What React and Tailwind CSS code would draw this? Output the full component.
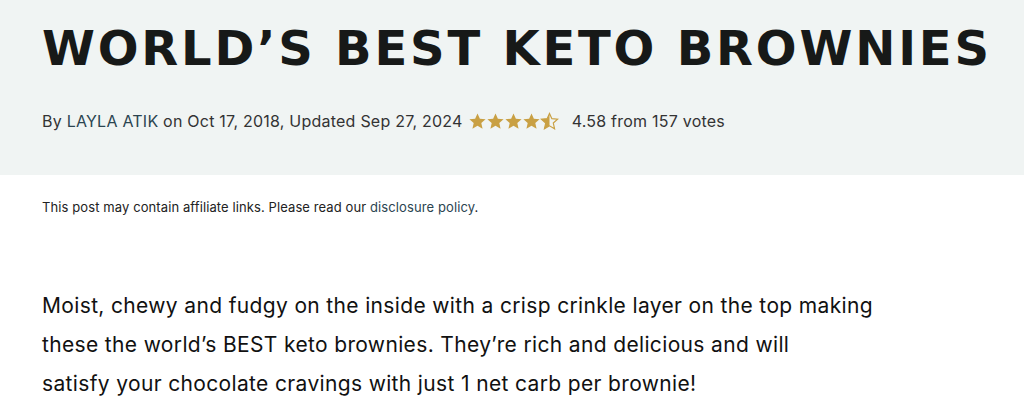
import React from "react";

const Star = ({ half }) => (
  <svg width="19" height="19" viewBox="0 0 24 24" className="-mr-[1px]">
    <defs>
      <clipPath id="halfclip">
        <rect x="0" y="0" width="12" height="24" />
      </clipPath>
    </defs>
    {half ? (
      <>
        <path
          d="M12 1.8l3 6.6 7.2.8-5.4 4.8 1.6 7.1L12 17.5l-6.4 3.6 1.6-7.1-5.4-4.8 7.2-.8z"
          fill="none"
          stroke="#c9a043"
          strokeWidth="1.5"
        />
        <path
          d="M12 1.8l3 6.6 7.2.8-5.4 4.8 1.6 7.1L12 17.5l-6.4 3.6 1.6-7.1-5.4-4.8 7.2-.8z"
          fill="#c9a043"
          clipPath="url(#halfclip)"
        />
      </>
    ) : (
      <path
        d="M12 1.8l3 6.6 7.2.8-5.4 4.8 1.6 7.1L12 17.5l-6.4 3.6 1.6-7.1-5.4-4.8 7.2-.8z"
        fill="#c9a043"
      />
    )}
  </svg>
);

export default function App() {
  return (
    <div className="w-[1024px] h-[408px] overflow-hidden bg-white font-['Inter',sans-serif]">
      <div className="h-[175px] bg-[#f0f4f3] px-[42px] pt-[22px]">
        <h1 className="font-['DejaVu_Sans',sans-serif] font-bold text-[48px] leading-[52px] tracking-[2.8px] text-[#171918] whitespace-nowrap">
          WORLD’S BEST KETO BROWNIES
        </h1>
        <div className="mt-[35px] flex items-center text-[16px] tracking-[0.23px] text-[#333]">
          <span>
            By <span className="text-[#2b4450]">LAYLA ATIK</span> on Oct 17,
            2018, Updated Sep 27, 2024
          </span>
          <span className="ml-[5px] flex items-center">
            <Star />
            <Star />
            <Star />
            <Star />
            <Star half />
          </span>
          <span className="ml-[14px]">4.58 from 157 votes</span>
        </div>
      </div>
      <p className="px-[42px] mt-[23px] text-[13px] tracking-[0.1px] text-[#222]">
        This post may contain affiliate links. Please read our{" "}
        <span className="text-[#2b4450]">disclosure policy</span>.
      </p>
      <p className="px-[42px] mt-[68px] text-[21px] leading-[39px] tracking-[0.35px] text-[#111]">
        Moist, chewy and fudgy on the inside with a crisp crinkle layer on the
        top making
        <br />
        these the world’s BEST keto brownies. They’re rich and delicious and
        will
        <br />
        satisfy your chocolate cravings with just 1 net carb per brownie!
      </p>
    </div>
  );
}
